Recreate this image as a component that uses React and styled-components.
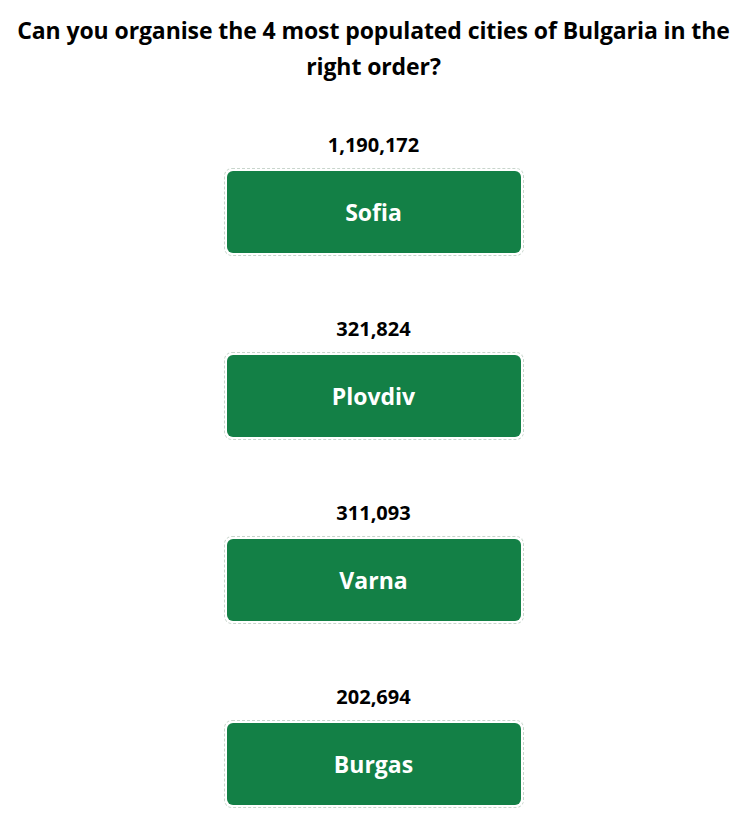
import React from "react";
import styled, { createGlobalStyle } from "styled-components";

const Global = createGlobalStyle`
  html, body { margin: 0; padding: 0; background: #ffffff; }
  body { font-family: "Open Sans", "Noto Sans", sans-serif; color: #000; }
`;

const Page = styled.main`
  display: flex;
  flex-direction: column;
  align-items: center;
  padding-top: 12px;
`;

const Title = styled.h1`
  margin: 0 0 49px;
  font-size: 23px;
  line-height: 36px;
  font-weight: 700;
  text-align: center;
  max-width: 720px;
  letter-spacing: -0.1px;
`;

const List = styled.div`
  display: flex;
  flex-direction: column;
  align-items: center;
  gap: 61px;
`;

const Item = styled.div`
  display: flex;
  flex-direction: column;
  align-items: center;
`;

const Label = styled.div`
  font-size: 20px;
  line-height: 24px;
  font-weight: 700;
  margin-bottom: 11px;
`;

const DropZone = styled.div`
  width: 300px;
  box-sizing: border-box;
  border: 1px dashed #c9d6cd;
  border-radius: 8px;
  padding: 2px;
`;

const Card = styled.div`
  height: 82px;
  border-radius: 6px;
  background: #138046;
  color: #ffffff;
  display: flex;
  align-items: center;
  justify-content: center;
  font-size: 23px;
  font-weight: 700;
`;

const cities = [
  { pop: "1,190,172", name: "Sofia" },
  { pop: "321,824", name: "Plovdiv" },
  { pop: "311,093", name: "Varna" },
  { pop: "202,694", name: "Burgas" },
];

export default function App() {
  return (
    <>
      <Global />
      <Page>
        <Title>
          Can you organise the 4 most populated cities of Bulgaria in the right order?
        </Title>
        <List>
          {cities.map((c) => (
            <Item key={c.name}>
              <Label>{c.pop}</Label>
              <DropZone>
                <Card>{c.name}</Card>
              </DropZone>
            </Item>
          ))}
        </List>
      </Page>
    </>
  );
}
